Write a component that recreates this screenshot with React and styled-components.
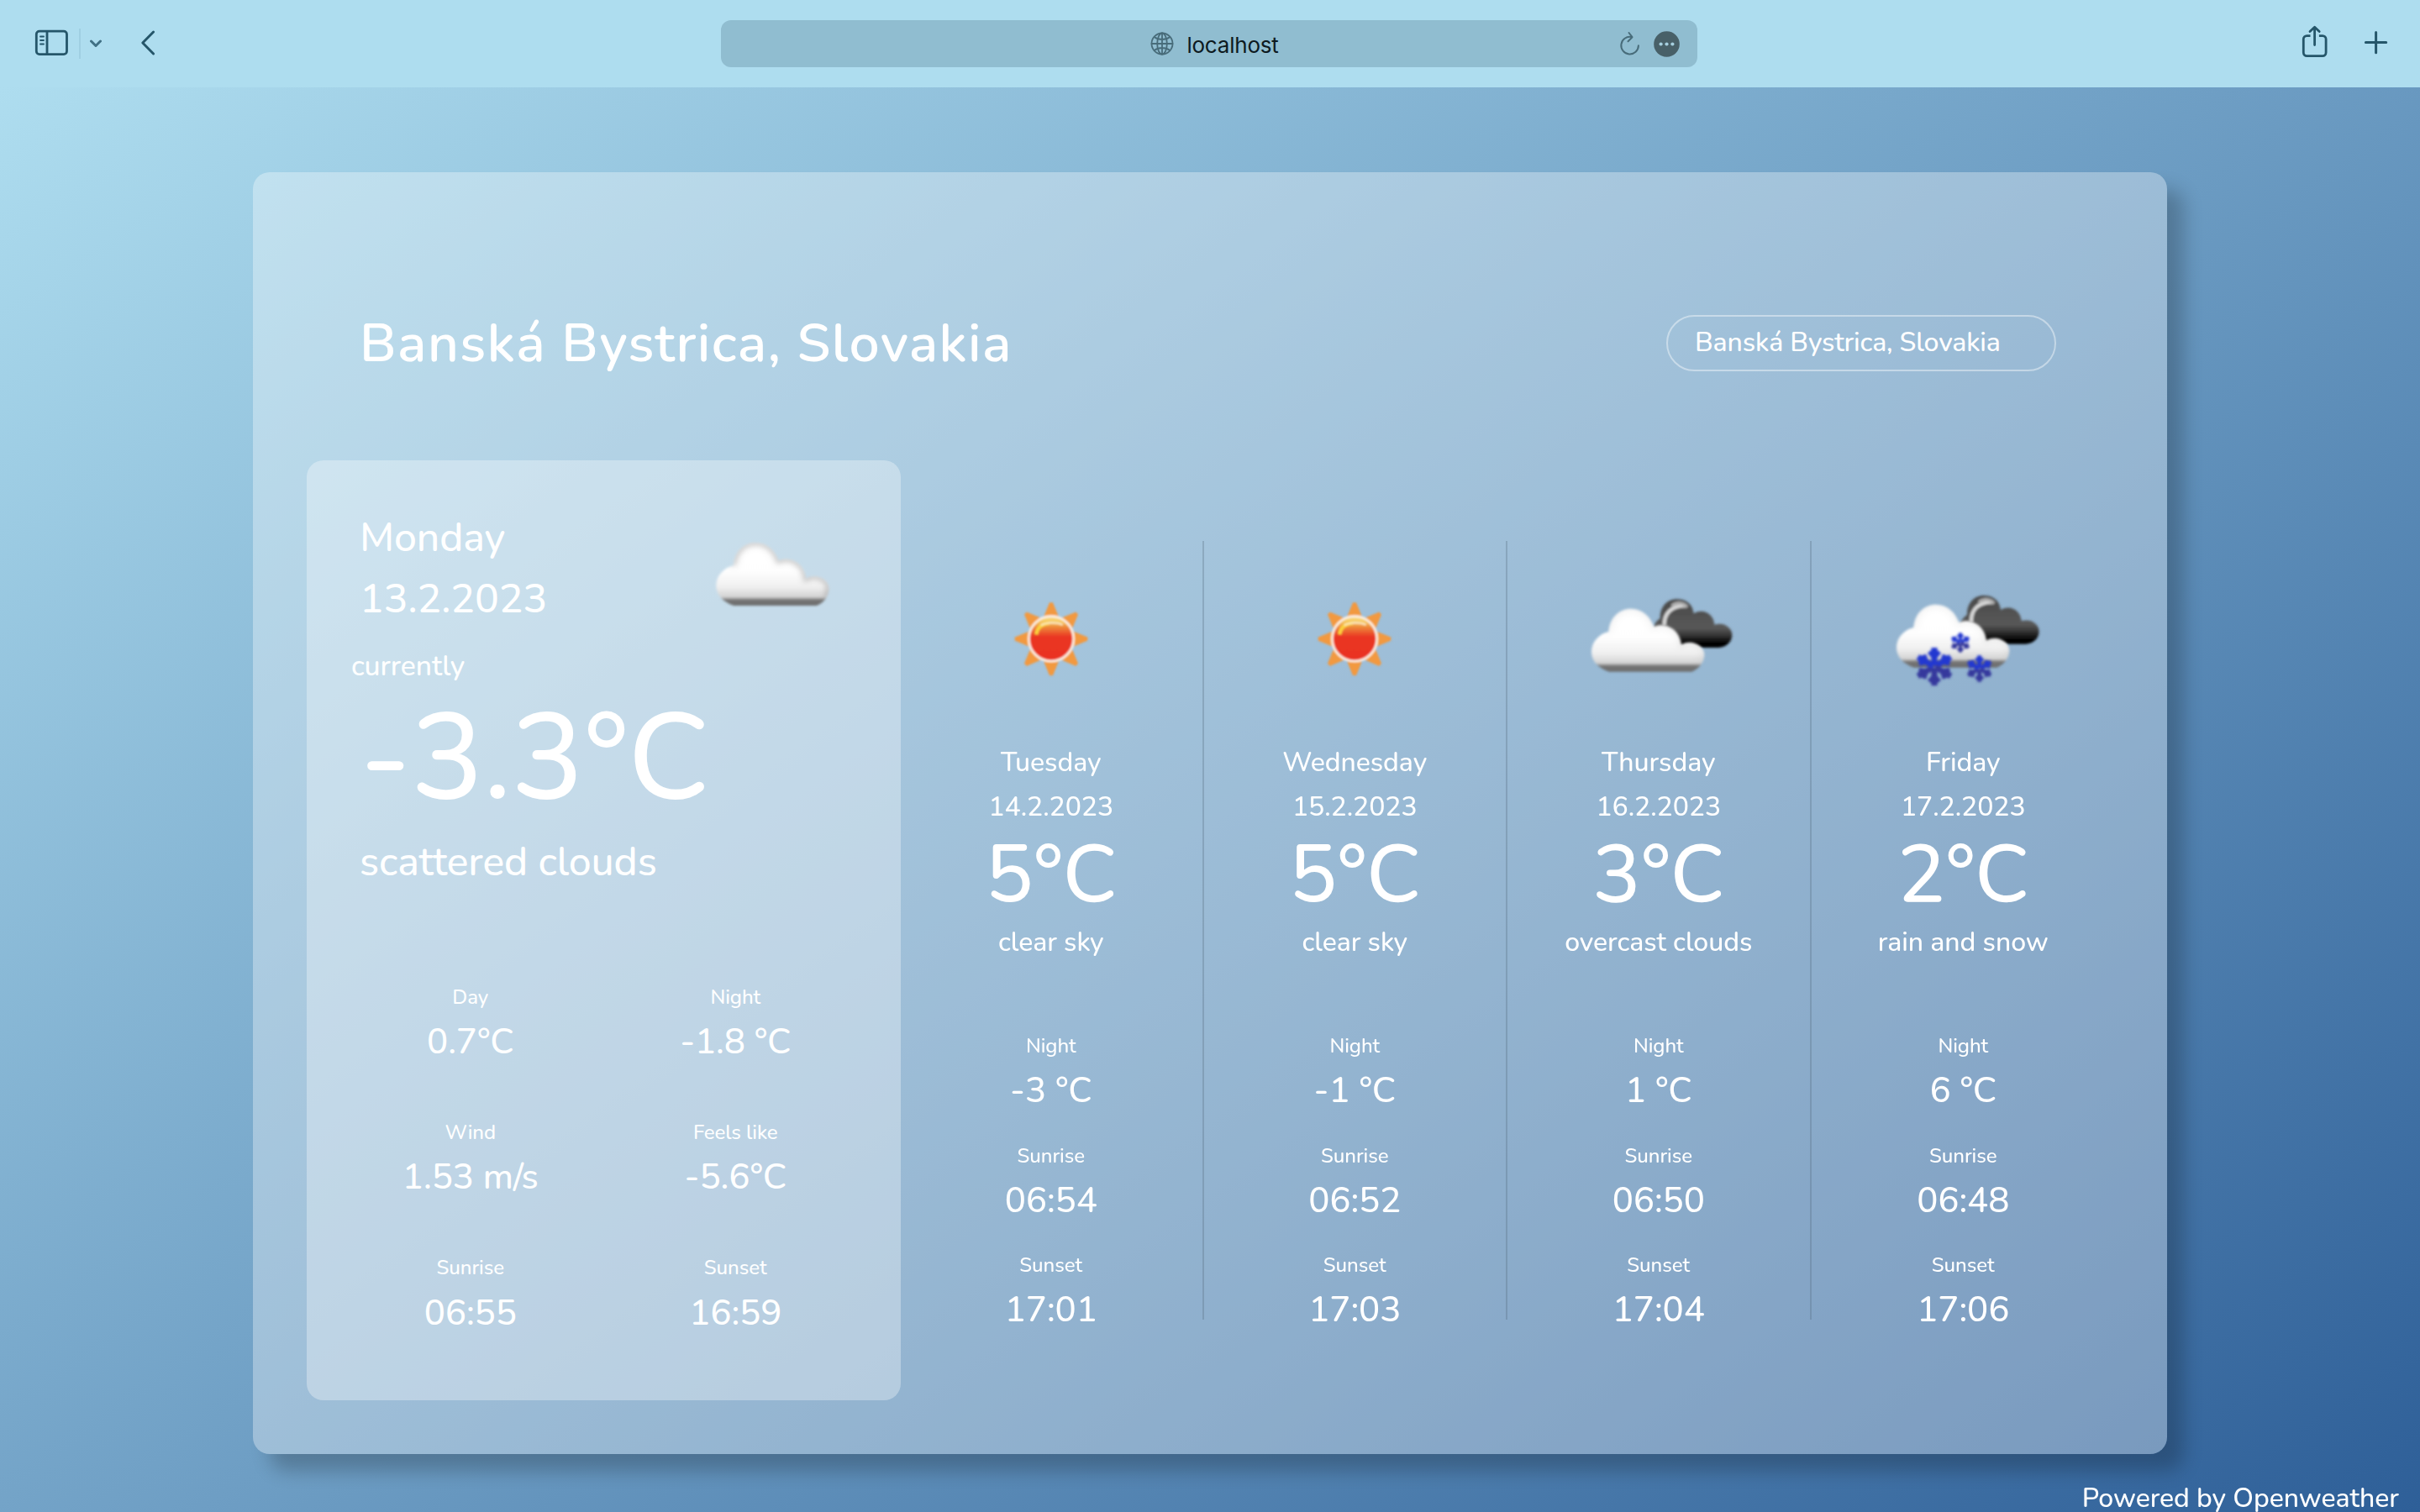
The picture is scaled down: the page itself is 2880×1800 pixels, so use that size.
import React from 'react';
import styled, { createGlobalStyle } from 'styled-components';

const GlobalStyle = createGlobalStyle`
  *, *::before, *::after { box-sizing: border-box; }
  html, body { margin: 0; padding: 0; }
  body {
    background: #2f6098;
    color: #fff;
    font-family: Nunito, Lato, "Open Sans", sans-serif;
    font-weight: 500;
  }
`;

/* ---------- browser bar ---------- */

const Screen = styled.div`
  width: 2880px;
  height: 1800px;
  overflow: hidden;
  display: flex;
  flex-direction: column;
`;

const Toolbar = styled.header`
  flex: none;
  height: 104px;
  display: grid;
  grid-template-columns: 858px 1162px 860px;
  align-items: center;
  background: #aeddef;
  color: #25566a;
`;

const ToolGroup = styled.div`
  display: flex;
  align-items: center;
  height: 104px;
  padding: ${(p) => (p.$end ? '0 36px 2px 0' : '0 0 2px 40px')};
  justify-content: ${(p) => (p.$end ? 'flex-end' : 'flex-start')};
`;

const ToolIcon = styled.svg`
  display: block;
  flex: none;
  width: ${(p) => p.$w}px;
  height: ${(p) => p.$h}px;
  margin-left: ${(p) => p.$gap || 0}px;
  fill: none;
  stroke: currentColor;
  stroke-linecap: round;
  stroke-linejoin: round;
`;

const ToolDivider = styled.span`
  width: 2px;
  height: 36px;
  margin: 2px 0 0 11px;
  background: #9fcfe2;
`;

const AddressBar = styled.div`
  height: 56px;
  display: grid;
  grid-template-columns: 1fr auto 1fr;
  align-items: center;
  border-radius: 12px;
  background: #90bdd0;
  color: #486c7a;
`;

const Address = styled.div`
  grid-column: 2;
  display: flex;
  align-items: center;
  gap: 15px;
  padding-left: 13px;
`;

const Host = styled.span`
  padding-top: 3px;
  font: 400 26px/32px Inter, "Liberation Sans", sans-serif;
  letter-spacing: -0.008em;
  color: #0d1a1f;
`;

const AddressActions = styled.div`
  display: flex;
  align-items: center;
  justify-content: flex-end;
  padding-right: 21px;
`;

/* ---------- page ---------- */

const Page = styled.main`
  flex: 1;
  display: flex;
  flex-direction: column;
  align-items: center;
  padding-top: 101px;
  background: linear-gradient(145deg, #aeddef, #6e9ec4 50%, #2e5f98);
`;

const Panel = styled.section`
  flex: none;
  width: 2278px;
  height: 1526px;
  padding: 64px;
  border-radius: 20px;
  background: rgba(255, 255, 255, 0.33);
  box-shadow: 20px 20px 22px rgba(0, 0, 0, 0.22);
`;

const PanelHeader = styled.div`
  height: 279px;
  display: flex;
  align-items: center;
  justify-content: space-between;
  padding: 0 68px 0 63px;
`;

const Title = styled.h1`
  margin: 0;
  font-size: 64px;
  line-height: 88px;
  font-weight: 600;
  letter-spacing: 1.45px;
`;

const CityInput = styled.input`
  width: 464px;
  height: 67px;
  padding: 0 30px 2px 32px;
  border: 2px solid rgba(255, 255, 255, 0.42);
  border-radius: 34px;
  outline: none;
  background: transparent;
  color: #fff;
  font: inherit;
  font-size: 32px;
  letter-spacing: -0.004em;
`;

const Forecast = styled.div`
  display: flex;
  align-items: flex-start;
`;

const Line = styled.p`
  margin: ${(p) => p.$m || '0'};
  font-size: ${(p) => p.$size}px;
  line-height: ${(p) => p.$lh}px;
  letter-spacing: -0.002em;
  white-space: nowrap;
`;

const TodayCard = styled.article`
  flex: none;
  width: 707px;
  height: 1119px;
  padding-top: 56px;
  border-radius: 20px;
  background: rgba(255, 255, 255, 0.32);
`;

const TodayHead = styled.div`
  display: flex;
  justify-content: space-between;
  height: 146px;
  padding: 0 52px 0 63px;
`;

const TodayBody = styled.div`
  padding: 21px 0 0 63px;
`;

const TodayStats = styled.div`
  display: grid;
  grid-template-columns: 1fr 1fr;
  row-gap: 67px;
  padding: 117px 39px 0 37px;
`;

const Stat = styled.div`
  text-align: center;
`;

const Days = styled.div`
  display: grid;
  grid-template-columns: repeat(4, 361.5px);
  margin: 96px 0 0 -1px;
`;

const DayColumn = styled.article`
  height: 927px;
  text-align: center;
  border-right: ${(p) => (p.$last ? '0' : '2px solid rgba(80, 100, 120, 0.28)')};
`;

const DayIcon = styled.div`
  height: 235px;
  display: flex;
  align-items: center;
  justify-content: center;
`;

const DayStats = styled.div`
  display: grid;
  row-gap: 36.3px;
  margin-top: 88px;
`;

const WeatherSvg = styled.svg`
  display: block;
  flex: none;
  width: 200px;
  height: ${(p) => p.$h}px;
  margin-top: ${(p) => p.$top || 0}px;
`;

const Credit = styled.footer`
  align-self: flex-end;
  margin: 35px 25px 0 0;
  font-size: 32px;
  line-height: 35px;
  letter-spacing: -0.002em;
  white-space: nowrap;
`;

/* ---------- weather drawings ---------- */

const CLOUD =
  'M160 303 C120 290 95 262 97 228 C99 195 125 168 158 160 C162 110 195 78 238 78 C280 78 308 108 320 142 C360 125 412 150 418 206 C455 185 502 210 500 245 C498 270 480 295 455 303 Z';
const DARK_CLOUD =
  'M330 270 C322 240 308 190 346 165 C345 125 370 97 405 97 C440 97 462 115 466 148 C500 128 538 150 540 188 C575 178 605 200 603 228 C601 252 580 268 555 270 Z';

const Defs = ({ id }) => (
  <defs>
    <filter id={id + 'b'} x="-10%" y="-10%" width="120%" height="120%">
      <feGaussianBlur stdDeviation="4" />
    </filter>
    <filter id={id + 'e'} x="-10%" y="-10%" width="120%" height="120%">
      <feGaussianBlur stdDeviation="10" />
    </filter>
    <clipPath id={id + 'c'}>
      <path d={CLOUD} />
    </clipPath>
    <linearGradient id={id + 'w'} x1="0" y1="78" x2="0" y2="303" gradientUnits="userSpaceOnUse">
      <stop offset="0" stopColor="#fff" />
      <stop offset="0.45" stopColor="#fefefe" />
      <stop offset="0.7" stopColor="#f0f0f0" />
      <stop offset="0.86" stopColor="#d4d4d4" />
      <stop offset="0.91" stopColor="#747474" />
      <stop offset="1" stopColor="#6c6c6c" />
    </linearGradient>
    <linearGradient id={id + 'd'} x1="0" y1="97" x2="0" y2="270" gradientUnits="userSpaceOnUse">
      <stop offset="0" stopColor="#484848" />
      <stop offset="0.6" stopColor="#585858" />
      <stop offset="0.76" stopColor="#303030" />
      <stop offset="0.9" stopColor="#040404" />
      <stop offset="1" stopColor="#000" />
    </linearGradient>
  </defs>
);

const WhiteCloud = ({ id, shade }) => (
  <g filter={`url(#${id}b)`}>
    <path d={CLOUD} fill={`url(#${id}w)`} />
    <g clipPath={`url(#${id}c)`}>
      <path
        d="M158 160 C162 110 195 78 238 78 C280 78 308 108 320 142 C360 125 412 150 418 206 C455 185 502 210 500 245 L490 280"
        fill="none"
        stroke="#a0a0a0"
        strokeOpacity={shade}
        strokeWidth="20"
        filter={`url(#${id}e)`}
      />
    </g>
  </g>
);

const DarkCloud = ({ id }) => (
  <g filter={`url(#${id}b)`}>
    <path d={DARK_CLOUD} fill={`url(#${id}d)`} />
    <path d="M361 190 C360 148 385 120 436 121" fill="none" stroke="#dedede" strokeWidth="12" />
    <path d="M388 122 C402 108 428 108 442 126" fill="none" stroke="#b0b0b0" strokeWidth="12" />
  </g>
);

const Flake = ({ x, y, r }) => (
  <g transform={`translate(${x} ${y}) scale(${r / 75})`}>
    {[0, 60, 120, 180, 240, 300].map((a) => (
      <g key={a} transform={`rotate(${a})`}>
        <path
          d="M0 -4 V-68 M0 -36 L-16 -55 M0 -36 L16 -55"
          stroke={a > 90 && a < 270 ? '#34399c' : '#2337d0'}
          strokeWidth="21"
          fill="none"
        />
      </g>
    ))}
  </g>
);

const Clouds = () => (
  <WeatherSvg $h={130} $top={16} viewBox="0 0 600 390">
    <Defs id="few" />
    <WhiteCloud id="few" shade={0.6} />
  </WeatherSvg>
);

const Sun = () => (
  <WeatherSvg $h={160} viewBox="-57 -25 600 480">
    <defs>
      <filter id="sunBlur" x="-10%" y="-10%" width="120%" height="120%">
        <feGaussianBlur stdDeviation="3" />
      </filter>
      <linearGradient id="sunFill" x1="0" y1="0" x2="0" y2="1">
        <stop offset="0" stopColor="#fbe08a" />
        <stop offset="0.12" stopColor="#f6c85e" />
        <stop offset="0.24" stopColor="#ee8a3a" />
        <stop offset="0.46" stopColor="#ea3524" />
        <stop offset="1" stopColor="#ea3323" />
      </linearGradient>
    </defs>
    <g filter="url(#sunBlur)">
      {[0, 45, 90, 135, 180, 225, 270, 315].map((a) => (
        <path
          key={a}
          d="M237 81 H249 L270 132 H216 Z"
          fill="#f2993f"
          transform={`rotate(${a} 243 211)`}
        />
      ))}
      <circle cx="243" cy="210" r="80" fill="url(#sunFill)" stroke="#fbeee2" strokeWidth="9" />
      <path d="M190 195 C192 172 208 158 236 154" fill="none" stroke="#fbd23e" strokeWidth="13" />
      <path d="M206 162 C224 152 262 150 284 160" fill="none" stroke="#fbe9c4" strokeWidth="7" />
    </g>
  </WeatherSvg>
);

const Overcast = () => (
  <WeatherSvg $h={160} viewBox="41 3 600 480">
    <Defs id="ovc" />
    <DarkCloud id="ovc" />
    <g transform="translate(4 53)">
      <WhiteCloud id="ovc" shade={0.15} />
    </g>
  </WeatherSvg>
);

const Snow = () => (
  <WeatherSvg $h={160} viewBox="48 3 600 480">
    <Defs id="snw" />
    <g transform="translate(17 -13)">
      <DarkCloud id="snw" />
    </g>
    <g transform="translate(14 38)">
      <WhiteCloud id="snw" shade={0.15} />
    </g>
    <g filter="url(#snwb)">
      <Flake x={246} y={338} r={75} />
      <Flake x={339} y={252} r={39} />
      <Flake x={407} y={345} r={52} />
    </g>
  </WeatherSvg>
);

const ICONS = { sun: Sun, overcast: Overcast, snow: Snow };

/* ---------- data ---------- */

const todayStats = [
  { label: 'Day', value: '0.7°C' },
  { label: 'Night', value: '-1.8 °C' },
  { label: 'Wind', value: '1.53 m/s' },
  { label: 'Feels like', value: '-5.6°C' },
  { label: 'Sunrise', value: '06:55' },
  { label: 'Sunset', value: '16:59' },
];

const days = [
  { name: 'Tuesday', date: '14.2.2023', temp: '5°C', text: 'clear sky', icon: 'sun', night: '-3 °C', rise: '06:54', set: '17:01' },
  { name: 'Wednesday', date: '15.2.2023', temp: '5°C', text: 'clear sky', icon: 'sun', night: '-1 °C', rise: '06:52', set: '17:03' },
  { name: 'Thursday', date: '16.2.2023', temp: '3°C', text: 'overcast clouds', icon: 'overcast', night: '1 °C', rise: '06:50', set: '17:04' },
  { name: 'Friday', date: '17.2.2023', temp: '2°C', text: 'rain and snow', icon: 'snow', night: '6 °C', rise: '06:48', set: '17:06' },
];

const StatItem = ({ label, value }) => (
  <Stat>
    <Line $size={24} $lh={30}>{label}</Line>
    <Line $size={42} $lh={50} $m="14.2px 0 0">{value}</Line>
  </Stat>
);

const Day = ({ day, last }) => {
  const Icon = ICONS[day.icon];
  return (
    <DayColumn $last={last}>
      <DayIcon><Icon /></DayIcon>
      <Line $size={32} $lh={53} $m="1.6px 0 0">{day.name}</Line>
      <Line $size={32} $lh={53} $m="0.5px 0 0">{day.date}</Line>
      <Line $size={96} $lh={96} $m="7px 0 0">{day.temp}</Line>
      <Line $size={32} $lh={40} $m="12px 0 0">{day.text}</Line>
      <DayStats>
        <StatItem label="Night" value={day.night} />
        <StatItem label="Sunrise" value={day.rise} />
        <StatItem label="Sunset" value={day.set} />
      </DayStats>
    </DayColumn>
  );
};

export default function App() {
  return (
    <Screen>
      <GlobalStyle />
      <Toolbar>
        <ToolGroup>
          <ToolIcon $w={43} $h={36} viewBox="40 33 43 36" strokeWidth="2.8">
            <rect x="43.3" y="37.2" width="36.2" height="27.4" rx="3.6" />
            <path d="M56 37.5V64.5" />
            <path d="M48 43.5h4M48 48h4M48 52.5h4" strokeWidth="1.8" />
          </ToolIcon>
          <ToolDivider />
          <ToolIcon $w={20} $h={20} $gap={8} viewBox="104 41 20 20" strokeWidth="3" opacity="0.8">
            <path d="M108.5 49l5.5 5.5 5.5-5.5" />
          </ToolIcon>
          <ToolIcon $w={24} $h={36} $gap={40} viewBox="164 33 24 36" strokeWidth="3">
            <path d="M182.6 38L169.8 51l12.8 13" />
          </ToolIcon>
        </ToolGroup>
        <AddressBar>
          <Address>
            <ToolIcon $w={28} $h={28} viewBox="0 0 28 28" strokeWidth="1.8">
              <circle cx="14" cy="14" r="12.5" />
              <ellipse cx="14" cy="14" rx="5.8" ry="12.5" />
              <path d="M14 1.5v25M1.5 14h25M4.6 6c5.5 4 13.3 4 18.8 0M4.6 22c5.5-4 13.3-4 18.8 0" />
            </ToolIcon>
            <Host>localhost</Host>
          </Address>
          <AddressActions>
            <ToolIcon $w={28} $h={34} viewBox="1926 35 28 34" strokeWidth="2">
              <path d="M1941.5 44a10.3 10.3 0 1 0 8.4 10.3" />
              <path d="M1938.5 39l4 5.2-5 5" />
            </ToolIcon>
            <ToolIcon $w={31} $h={31} $gap={14} viewBox="0 0 31 31">
              <circle cx="15.5" cy="15.5" r="15.3" fill="#486068" stroke="none" />
              <g fill="#a6cfdf" stroke="none">
                <circle cx="8.6" cy="15.5" r="2.1" />
                <circle cx="15.5" cy="15.5" r="2.1" />
                <circle cx="22.4" cy="15.5" r="2.1" />
              </g>
            </ToolIcon>
          </AddressActions>
        </AddressBar>
        <ToolGroup $end>
          <ToolIcon $w={34} $h={44} viewBox="2738 29 34 44" strokeWidth="2.8">
            <path d="M2749.5 42.6h-4.2a4 4 0 0 0-4 4v16a4 4 0 0 0 4 4h18.8a4 4 0 0 0 4-4v-16a4 4 0 0 0-4-4h-4.2" strokeLinecap="butt" />
            <path d="M2754.6 53.5V33M2749 37.5l5.6-5.3 5.6 5.3" />
          </ToolIcon>
          <ToolIcon $w={32} $h={32} $gap={40} viewBox="2812 35 32 32" strokeWidth="3">
            <path d="M2827.6 38.4v24.3M2815.4 50.5h24.3" />
          </ToolIcon>
        </ToolGroup>
      </Toolbar>

      <Page>
        <Panel>
          <PanelHeader>
            <Title>Banská Bystrica, Slovakia</Title>
            <CityInput type="text" defaultValue="Banská Bystrica, Slovakia" />
          </PanelHeader>
          <Forecast>
            <TodayCard>
              <TodayHead>
                <div>
                  <Line $size={48} $lh={73}>Monday</Line>
                  <Line $size={48} $lh={73}>13.2.2023</Line>
                </div>
                <Clouds />
              </TodayHead>
              <TodayBody>
                <Line $size={33.7} $lh={44} $m="0 0 0 -10px">currently</Line>
                <Line $size={144} $lh={144} $m="16px 0 0">-3.3°C</Line>
                <Line $size={48} $lh={58} $m="22px 0 0">scattered clouds</Line>
              </TodayBody>
              <TodayStats>
                {todayStats.map((s) => <StatItem key={s.label} {...s} />)}
              </TodayStats>
            </TodayCard>
            <Days>
              {days.map((d, i) => <Day key={d.name} day={d} last={i === days.length - 1} />)}
            </Days>
          </Forecast>
        </Panel>
        <Credit>Powered by Openweather</Credit>
      </Page>
    </Screen>
  );
}
